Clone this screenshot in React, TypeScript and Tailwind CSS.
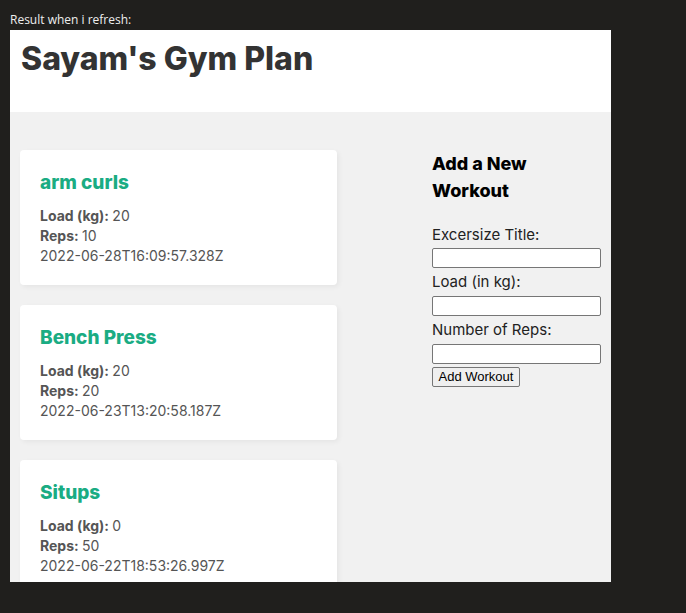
const workouts = [
  { title: "arm curls", load: 20, reps: 10, createdAt: "2022-06-28T16:09:57.328Z" },
  { title: "Bench Press", load: 20, reps: 20, createdAt: "2022-06-23T13:20:58.187Z" },
  { title: "Situps", load: 0, reps: 50, createdAt: "2022-06-22T18:53:26.997Z" },
];

function WorkoutDetails({ w }: { w: (typeof workouts)[number] }) {
  return (
    <div className="shrink-0 bg-white rounded-[4px] shadow-[2px_2px_5px_rgba(0,0,0,0.05)] h-[135px] pt-[21px] px-[20px]">
      <h4 className="text-[19px] font-extrabold text-[#1aac83] leading-[24px] mb-[11px]">{w.title}</h4>
      <p className="text-[14px] leading-[20px] text-[#555]">
        <strong className="font-bold">Load (kg): </strong>
        {w.load}
      </p>
      <p className="text-[14px] leading-[20px] text-[#555]">
        <strong className="font-bold">Reps: </strong>
        {w.reps}
      </p>
      <p className="text-[14px] leading-[20px] text-[#555]">{w.createdAt}</p>
    </div>
  );
}

export default function App() {
  return (
    <div className="w-[686px] h-[613px] bg-[#201f1d] overflow-hidden">
      <div className="h-[30px] pl-[10px] pt-[12px] text-[12px] leading-[16px] text-[#eee] font-['Open_Sans',sans-serif]">
        Result when i refresh:
      </div>
      <div className="ml-[10px] w-[601px] h-[552px] overflow-hidden font-['Inter',sans-serif]">
        <header className="bg-white h-[82px] pl-[11px] pt-[9px]">
          <h1 className="text-[32px] leading-[40px] font-extrabold text-[#333]">Sayam's Gym Plan</h1>
        </header>
        <main className="bg-[#f1f1f1] h-[470px] flex items-start pl-[10px] pt-[38px]">
          <div className="w-[317px] flex flex-col gap-[20px]">
            {workouts.map((w) => (
              <WorkoutDetails key={w.createdAt} w={w} />
            ))}
          </div>
          <form className="ml-[95px] w-[170px] flex flex-col">
            <h3 className="text-[18px] font-extrabold leading-[27px] text-black">
              Add a New
              <br />
              Workout
            </h3>
            <label className="mt-[21px] text-[15px] leading-[20px] text-[#222]">Excersize Title:</label>
            <input type="text" className="mt-[3px] w-[169px] h-[20px] bg-white border border-[#767676] rounded-[2px]" />
            <label className="mt-[3px] text-[15px] leading-[22px] text-[#222]">Load (in kg):</label>
            <input type="number" className="mt-[3px] w-[169px] h-[20px] bg-white border border-[#767676] rounded-[2px]" />
            <label className="mt-[3px] text-[15px] leading-[22px] text-[#222]">Number of Reps:</label>
            <input type="number" className="mt-[3px] w-[169px] h-[20px] bg-white border border-[#767676] rounded-[2px]" />
            <button
              type="button"
              className="mt-[3px] self-start w-[88px] h-[20px] bg-[#efefef] border border-[#767676] rounded-[2px] text-[13px] leading-[16px] text-black font-['Liberation_Sans',sans-serif]"
            >
              Add Workout
            </button>
          </form>
        </main>
      </div>
    </div>
  );
}
